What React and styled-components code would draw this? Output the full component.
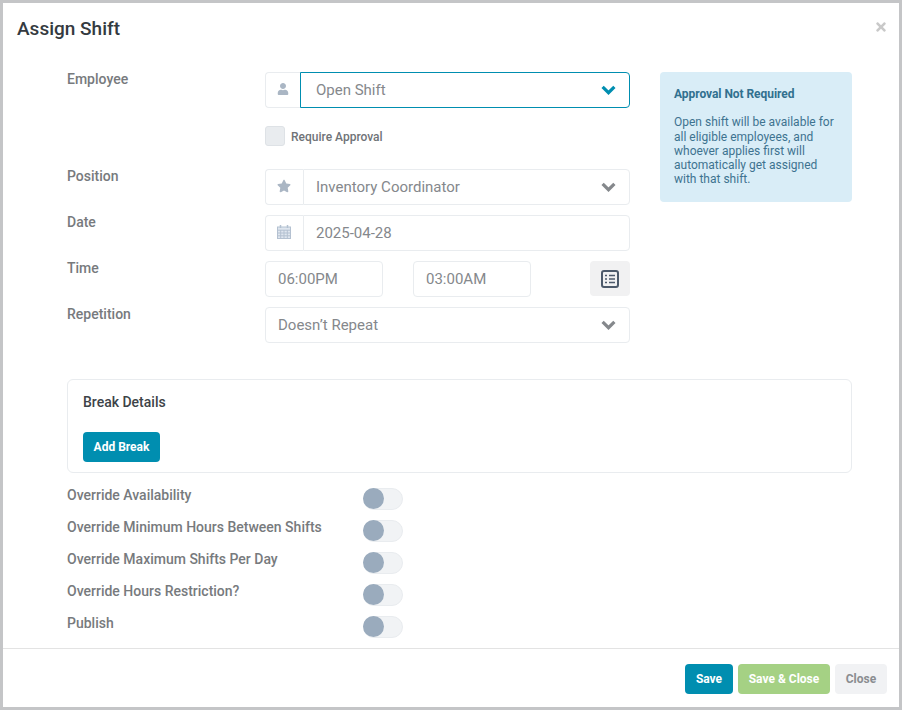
import React from "react";
import styled, { createGlobalStyle } from "styled-components";
import { FaUser, FaStar, FaTimes } from "react-icons/fa";

const Global = createGlobalStyle`
  html, body { margin: 0; padding: 0; background: #c4c5c7; }
  * { box-sizing: border-box; }
  body { font-family: Roboto, "Liberation Sans", sans-serif; }
`;

const Frame = styled.div`
  width: 902px;
  height: 710px;
  padding: 3px;
  background: #c4c5c7;
`;
const Modal = styled.div`
  width: 896px;
  height: 704px;
  background: #fff;
  display: flex;
  flex-direction: column;
`;
const Header = styled.div`
  height: 69px;
  flex: none;
  padding: 14px 11px 0 14px;
  display: flex;
  justify-content: space-between;
  align-items: flex-start;
`;
const Title = styled.h1`
  margin: 0;
  font-size: 19px;
  line-height: 24px;
  font-weight: 500;
  color: #343a40;
`;
const CloseX = styled.span`
  color: #c9c9c9;
  font-size: 14px;
  display: flex;
  margin-top: 3px;
`;
const Body = styled.div`
  flex: 1;
  padding: 0 47px 0 64px;
`;
const Top = styled.div`
  display: flex;
  gap: 30px;
  align-items: flex-start;
`;
const Form = styled.div`
  width: 563px;
  display: flex;
  flex-direction: column;
  gap: 10px;
`;
const Row = styled.div`
  display: grid;
  grid-template-columns: 198px 365px;
`;
const Label = styled.label`
  font-size: 14px;
  line-height: 15px;
  font-weight: 500;
  color: #777a7d;
`;
const Group = styled.div`
  display: flex;
  height: 36px;
  width: 100%;
`;
const Addon = styled.span`
  width: ${(p) => p.$w || 38}px;
  flex: none;
  height: 36px;
  padding: 0 1px 2px 0;
  border: 1px solid #e9ecef;
  border-right: 0;
  border-radius: 4px 0 0 4px;
  display: flex;
  align-items: center;
  justify-content: center;
  color: #aab6c4;
  font-size: ${(p) => p.$size || 14}px;
`;
const Field = styled.div`
  flex: 1;
  height: 36px;
  display: flex;
  align-items: center;
  justify-content: space-between;
  padding: 0 13px 0 ${(p) => p.$pl || 12}px;
  font-size: 15px;
  color: #85888c;
  border: 1px solid ${(p) => (p.$active ? "#008eb0" : "#e9ecef")};
  border-radius: ${(p) => (p.$attached ? "0 4px 4px 0" : "4px")};
  background: #fff;
`;
const CheckRow = styled.div`
  display: flex;
  align-items: center;
  gap: 6px;
  height: 20px;
  margin: 18px 0 13px;
`;
const Check = styled.span`
  width: 20px;
  height: 20px;
  border-radius: 3px;
  border: 1px solid #dee2e6;
  background: #e9ecef;
`;
const CheckLabel = styled.span`
  font-size: 12px;
  font-weight: 500;
  color: #6f7377;
  padding-top: 1px;
`;
const EmployeeCol = styled.div`
  display: flex;
  flex-direction: column;
`;
const Times = styled.div`
  display: flex;
  gap: 30px;
  align-items: flex-start;
`;
const TimeInput = styled.div`
  width: 118px;
  height: 36px;
  border: 1px solid #e9ecef;
  border-radius: 4px;
  display: flex;
  align-items: center;
  padding-left: 12px;
  font-size: 15px;
  color: #85888c;
`;
const ListBtn = styled.span`
  margin-left: auto;
  width: 40px;
  height: 35px;
  background: #f1f1f2;
  border-radius: 4px;
  display: flex;
  align-items: center;
  justify-content: center;
`;
const Info = styled.aside`
  width: 192px;
  height: 130px;
  background: #d9edf7;
  border-radius: 4px;
  padding: 15px 14px;
  color: #3e7390;
  font-size: 12px;
  line-height: 14.3px;
`;
const InfoTitle = styled.div`
  font-weight: 700;
  color: #31708f;
  margin-bottom: 14px;
  letter-spacing: -0.05px;
`;
const Card = styled.section`
  height: 94px;
  margin-top: 36px;
  border: 1px solid #e9ecef;
  border-radius: 6px;
  padding: 14px 15px 0;
  display: flex;
  flex-direction: column;
  align-items: flex-start;
`;
const CardTitle = styled.div`
  font-size: 14px;
  line-height: 17px;
  font-weight: 500;
  color: #3d4348;
  margin-bottom: 21px;
`;
const Btn = styled.button`
  height: 30px;
  flex: none;
  width: ${(p) => p.$w}px;
  border: 0;
  border-radius: 4px;
  padding: 0;
  font: 700 12px Roboto, sans-serif;
  background: ${(p) => p.$bg};
  color: ${(p) => p.$fg || "#fff"};
`;
const Toggles = styled.div`
  margin-top: 15px;
  display: flex;
  flex-direction: column;
  gap: 10px;
`;
const ToggleRow = styled.div`
  display: grid;
  grid-template-columns: 296px 40px;
  height: 22px;
`;
const Track = styled.span`
  width: 40px;
  height: 22px;
  border-radius: 11px;
  background: #f1f3f5;
  border: 1px solid #e9ecef;
  position: relative;
  display: block;
`;
const Knob = styled.span`
  position: absolute;
  left: -1px;
  top: -1px;
  width: 21px;
  height: 21px;
  border-radius: 50%;
  background: #9aabbd;
`;
const Footer = styled.div`
  height: 59px;
  flex: none;
  border-top: 1px solid #e3e3e3;
  padding: 15px 12px 0 0;
  display: flex;
  justify-content: flex-end;
  gap: 5px;
`;

const Chevron = ({ active }) => (
  <svg width="15" height="10" viewBox="0 0 15 10" fill="none">
    <path d="M1.6 1.8L7.5 7.7L13.4 1.8" stroke={active ? "#008eb0" : "#85888c"} strokeWidth="3.2" />
  </svg>
);

const CalendarIcon = () => (
  <svg width="14" height="14" viewBox="0 0 14 14" fill="none">
    <rect x="0.5" y="2" width="13" height="11.5" fill="#dfe6ef" stroke="#b4c1d1" />
    <path d="M0.5 5.2H13.5M0.5 8H13.5M0.5 10.8H13.5M3.7 5V13.5M7 5V13.5M10.3 5V13.5" stroke="#b4c1d1" />
    <path d="M3.5 0V3M10.5 0V3" stroke="#b4c1d1" strokeWidth="1.5" />
  </svg>
);

const ListIcon = () => (
  <svg width="18" height="18" viewBox="0 0 18 18" fill="none">
    <rect x="1" y="1" width="16" height="16" rx="2" stroke="#4d5a6b" strokeWidth="2" />
    <path d="M4 5.5H6M8 5.5H14M4 9H6M8 9H14M4 12.5H6M8 12.5H14" stroke="#4d5a6b" strokeWidth="1.6" />
  </svg>
);

const toggles = [
  "Override Availability",
  "Override Minimum Hours Between Shifts",
  "Override Maximum Shifts Per Day",
  "Override Hours Restriction?",
  "Publish",
];

export default function App() {
  return (
    <Frame>
      <Global />
      <Modal>
        <Header>
          <Title>Assign Shift</Title>
          <CloseX><FaTimes /></CloseX>
        </Header>
        <Body>
          <Top>
            <Form>
              <Row>
                <Label>Employee</Label>
                <EmployeeCol>
                  <Group>
                    <Addon $w={35} $size={12}><FaUser /></Addon>
                    <Field $active $attached $pl={15}>
                      Open Shift
                      <Chevron active />
                    </Field>
                  </Group>
                  <CheckRow>
                    <Check />
                    <CheckLabel>Require Approval</CheckLabel>
                  </CheckRow>
                </EmployeeCol>
              </Row>
              <Row>
                <Label>Position</Label>
                <Group>
                  <Addon><FaStar /></Addon>
                  <Field $attached>
                    Inventory Coordinator
                    <Chevron />
                  </Field>
                </Group>
              </Row>
              <Row>
                <Label>Date</Label>
                <Group>
                  <Addon><CalendarIcon /></Addon>
                  <Field $attached>2025-04-28</Field>
                </Group>
              </Row>
              <Row>
                <Label>Time</Label>
                <Times>
                  <TimeInput>06:00PM</TimeInput>
                  <TimeInput>03:00AM</TimeInput>
                  <ListBtn><ListIcon /></ListBtn>
                </Times>
              </Row>
              <Row>
                <Label>Repetition</Label>
                <Field>
                  Doesn’t Repeat
                  <Chevron />
                </Field>
              </Row>
            </Form>
            <Info>
              <InfoTitle>Approval Not Required</InfoTitle>
              Open shift will be available for all eligible employees, and whoever applies first will automatically get assigned with that shift.
            </Info>
          </Top>
          <Card>
            <CardTitle>Break Details</CardTitle>
            <Btn $w={77} $bg="#008eb0">Add Break</Btn>
          </Card>
          <Toggles>
            {toggles.map((t) => (
              <ToggleRow key={t}>
                <Label>{t}</Label>
                <Track><Knob /></Track>
              </ToggleRow>
            ))}
          </Toggles>
        </Body>
        <Footer>
          <Btn $w={48} $bg="#008eb0">Save</Btn>
          <Btn $w={92} $bg="#a5d184">Save &amp; Close</Btn>
          <Btn $w={52} $bg="#f1f2f4" $fg="#8a8d91">Close</Btn>
        </Footer>
      </Modal>
    </Frame>
  );
}
